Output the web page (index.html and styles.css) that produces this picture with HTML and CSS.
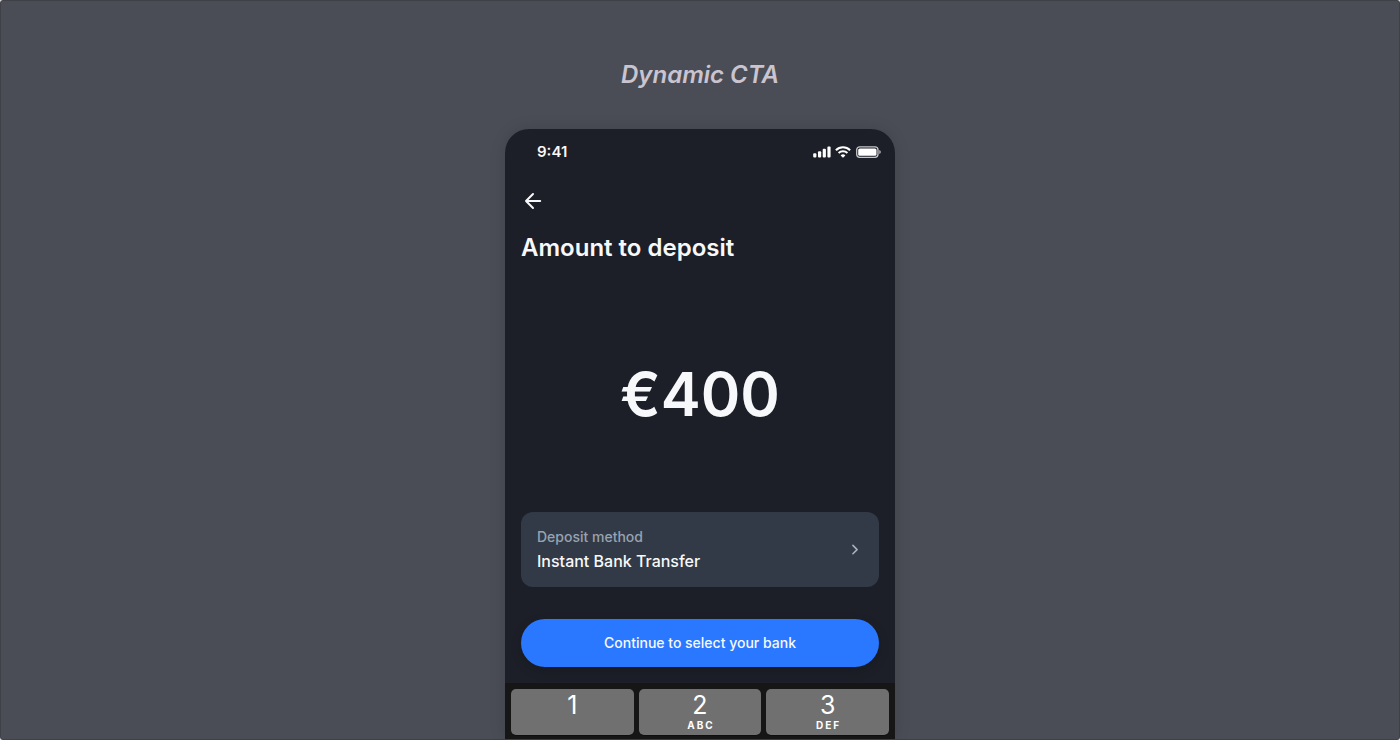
FILE: index.html
```html
<!DOCTYPE html>
<html lang="en">
<head>
<meta charset="utf-8">
<meta name="viewport" content="width=device-width, initial-scale=1">
<title>Dynamic CTA</title>
<link rel="stylesheet" href="styles.css">
</head>
<body>
<main class="stage">
  <h2 class="caption">Dynamic CTA</h2>
  <section class="phone">
    <div class="status">
      <span class="time">9:41</span>
      <svg class="status-icons" width="68" height="12" viewBox="0 0 68 12" fill="#fff" aria-hidden="true">
        <rect x="0.2" y="7.3" width="3.2" height="4.2" rx="1"/>
        <rect x="5" y="5.2" width="3.2" height="6.3" rx="1"/>
        <rect x="9.7" y="2.8" width="3.2" height="8.7" rx="1"/>
        <rect x="14.4" y="0.5" width="3.2" height="11" rx="1"/>
        <path d="M22.9 4.2a10.1 10.1 0 0 1 14.2 0M25.6 7.1a6.3 6.3 0 0 1 8.8 0" fill="none" stroke="#fff" stroke-width="2.1" stroke-linecap="butt"/>
        <path d="M30 11.8l-2.4-2.4a3.5 3.5 0 0 1 4.8 0z"/>
        <rect x="43.7" y="0.9" width="21.3" height="10.4" rx="3" fill="none" stroke="#fff" stroke-width="1.3" stroke-opacity=".75"/>
        <rect x="45.2" y="2.4" width="18.3" height="7.4" rx="1.6"/>
        <path d="M66.4 4.1v4a2.2 2.2 0 0 0 0-4z" fill-opacity=".85"/>
      </svg>
    </div>
    <div class="content">
      <button class="back" type="button" aria-label="Back">
        <svg width="24" height="24" viewBox="0 0 24 24" fill="none" stroke="#f7f8fa" stroke-width="2" stroke-linecap="round" stroke-linejoin="round"><path d="M19.2 12H5M12 5l-7 7 7 7"/></svg>
      </button>
      <h1 class="title">Amount to deposit</h1>
      <p class="amount">€400</p>
      <button class="method" type="button">
        <span class="method-text">
          <span class="method-label">Deposit method</span>
          <span class="method-name">Instant Bank Transfer</span>
        </span>
        <svg width="16" height="16" viewBox="0 0 16 16" fill="none" stroke="#a9b4c0" stroke-width="1.5" stroke-linecap="round" stroke-linejoin="round" aria-hidden="true"><path d="M5.9 4.4l4.2 4.2-4.2 4.2"/></svg>
      </button>
      <button class="cta" type="button">Continue to select your bank</button>
    </div>
    <div class="keypad">
      <button class="key" type="button"><span class="digit">1</span></button>
      <button class="key" type="button"><span class="digit">2</span><span class="letters">ABC</span></button>
      <button class="key" type="button"><span class="digit">3</span><span class="letters">DEF</span></button>
    </div>
  </section>
</main>
</body>
</html>
```
FILE: styles.css
```css
* { box-sizing: border-box; }

html { background: #d9d9dc; }

body {
  margin: 0;
  font-family: Inter, "Liberation Sans", sans-serif;
  color: #f7f8fa;
}

button {
  border: 0;
  padding: 0;
  font: inherit;
  color: inherit;
  cursor: pointer;
}

.stage {
  display: flex;
  flex-direction: column;
  align-items: center;
  min-height: 100vh;
  padding-top: 58px;
  border: 1px solid #3f4147;
  border-radius: 3px;
  background: #4a4d55;
}

.caption {
  margin: 0 0 38px;
  font-size: 24px;
  line-height: 32px;
  font-weight: 600;
  font-style: italic;
  color: #cac4d0;
}

.phone {
  display: flex;
  flex-direction: column;
  flex: 1;
  width: 100%;
  max-width: 390px;
  border-radius: 24px 24px 0 0;
  background: #1c1f27;
  box-shadow: 0 0 16px rgba(0, 0, 0, .12);
  overflow: hidden;
}

.status {
  display: flex;
  align-items: center;
  justify-content: space-between;
  height: 44px;
  padding: 2px 14px 0 32px;
}

.time {
  font-size: 15px;
  line-height: 20px;
  font-weight: 600;
}

.content {
  display: flex;
  flex-direction: column;
  padding: 16px;
}

.back {
  display: flex;
  width: 24px;
  height: 24px;
  background: none;
}

.title {
  margin: 19px 0 0;
  font-size: 24px;
  line-height: 32px;
  font-weight: 600;
}

.amount {
  margin: 92px 0 80px;
  font-size: 60px;
  line-height: 76px;
  font-weight: 600;
  text-align: center;
}

.method {
  display: flex;
  align-items: center;
  justify-content: space-between;
  padding: 13px 16px 14px;
  border-radius: 12px;
  background: #333a47;
  text-align: left;
}

.method-text {
  display: flex;
  flex-direction: column;
}

.method-label {
  font-size: 14px;
  line-height: 24px;
  font-weight: 500;
  color: #97a3b2;
}

.method-name {
  font-size: 16px;
  line-height: 24px;
  font-weight: 500;
}

.cta {
  margin-top: 32px;
  height: 48px;
  border-radius: 24px;
  background: #2a78ff;
  font-size: 14px;
  line-height: 20px;
  font-weight: 500;
  box-shadow: 0 4px 12px rgba(0, 0, 0, .15);
}

.keypad {
  display: grid;
  grid-template-columns: repeat(3, 1fr);
  gap: 5px;
  flex: 1;
  padding: 6px 6px 4px;
  background: #161616;
}

.key {
  display: flex;
  flex-direction: column;
  align-items: center;
  height: 46px;
  border-radius: 5px;
  background: #707070;
  color: #fff;
  box-shadow: 0 1px 0 rgba(0, 0, 0, .35);
}

.digit {
  font-size: 25px;
  line-height: 32px;
}

.letters {
  padding-left: 2px;
  font-size: 10px;
  line-height: 8px;
  font-weight: 700;
  letter-spacing: 2px;
}
```
